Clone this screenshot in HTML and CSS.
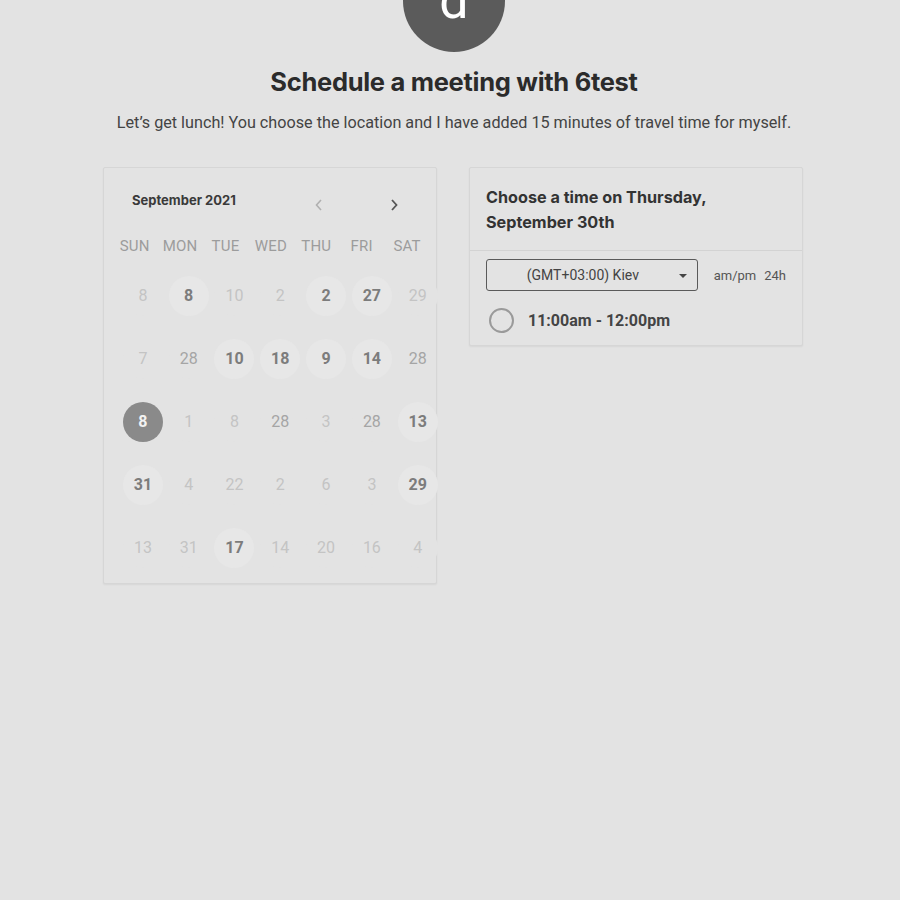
FILE: index.html
```html
<!DOCTYPE html>
<html>
<head>
<meta charset="utf-8">
<link rel="stylesheet" href="styles.css">
</head>
<body>
<div class="page">
  <div class="avatar">d</div>
  <h1 class="title">Schedule a meeting with 6test</h1>
  <p class="subtitle">Let’s get lunch! You choose the location and I have added 15 minutes of travel time for myself.</p>
  <div class="cards">
    <div class="card cal">
      <div class="cal-head">
        <span class="month">September 2021</span>
        <span class="nav">
          <svg class="chev prev" width="12" height="16" viewBox="0 0 12 16"><path d="M8 3 L3.5 8 L8 13" fill="none" stroke="#b0b0b0" stroke-width="1.6"/></svg>
          <svg class="chev next" width="12" height="16" viewBox="0 0 12 16"><path d="M4 3 L8.5 8 L4 13" fill="none" stroke="#555" stroke-width="1.8"/></svg>
        </span>
      </div>
      <div class="weekdays">
        <span>SUN</span><span>MON</span><span>TUE</span><span>WED</span><span>THU</span><span>FRI</span><span>SAT</span>
      </div>
      <div class="days">
        <span class="d light">8</span><span class="d av">8</span><span class="d light">10</span><span class="d light">2</span><span class="d av">2</span><span class="d av">27</span><span class="d light">29</span>
        <span class="d light">7</span><span class="d mid">28</span><span class="d av">10</span><span class="d av">18</span><span class="d av">9</span><span class="d av">14</span><span class="d mid clear">28</span>
        <span class="d sel">8</span><span class="d light">1</span><span class="d light">8</span><span class="d mid">28</span><span class="d light">3</span><span class="d mid">28</span><span class="d av">13</span>
        <span class="d av">31</span><span class="d light">4</span><span class="d light">22</span><span class="d light">2</span><span class="d light">6</span><span class="d light">3</span><span class="d av">29</span>
        <span class="d light">13</span><span class="d light">31</span><span class="d av">17</span><span class="d light">14</span><span class="d light">20</span><span class="d light">16</span><span class="d light">4</span>
      </div>
    </div>
    <div class="card times">
      <div class="times-head">Choose a time on Thursday, September 30th</div>
      <div class="times-body">
        <div class="tz-row">
          <div class="select">
            <span class="sel-text">(GMT+03:00) Kiev</span>
            <span class="caret"></span>
          </div>
          <div class="fmt"><span>am/pm</span><span>24h</span></div>
        </div>
        <div class="slot">
          <span class="radio"></span>
          <span class="slot-text">11:00am - 12:00pm</span>
        </div>
      </div>
    </div>
  </div>
</div>
</body>
</html>
```
FILE: styles.css
```css
html, body {
  margin: 0;
  padding: 0;
  background: #e3e3e3;
}
body {
  font-family: Roboto, "Liberation Sans", sans-serif;
  color: #333;
  height: 900px;
  overflow: hidden;
}
.page {
  display: flex;
  flex-direction: column;
  align-items: center;
  padding-left: 2px;
}
.avatar {
  width: 102px;
  height: 102px;
  margin-top: -50px;
  margin-left: 6px;
  border-radius: 50%;
  background: #5b5b5b;
  color: #fff;
  font-size: 52px;
  line-height: 102px;
  text-align: center;
}
.title {
  margin: 14px 0 0 6px;
  font-family: Inter, "Noto Sans", sans-serif;
  font-weight: 700;
  font-size: 25.5px;
  line-height: 32px;
  color: #2b2b2b;
  letter-spacing: -0.3px;
}
.subtitle {
  margin: 14px 0 0 6px;
  font-size: 16.2px;
  line-height: 22px;
  color: #444;
}
.cards {
  display: flex;
  align-items: flex-start;
  gap: 32px;
  margin-top: 33px;
  margin-left: 4px;
}
.card {
  border: 1px solid #d6d6d6;
  border-radius: 2px;
  box-shadow: 0 1px 2px rgba(0,0,0,0.06);
  background: #e3e3e3;
}
.cal {
  width: 332px;
  height: 415px;
  box-sizing: content-box;
}
.cal-head {
  display: flex;
  align-items: center;
  height: 64px;
  padding-left: 28px;
}
.month {
  font-family: Inter, "Noto Sans", sans-serif;
  font-weight: 700;
  font-size: 13px;
  color: #3a3a3a;
  width: 180px;
  margin-top: 0;
}
.nav {
  display: flex;
  gap: 63px;
  margin-left: 1px;
  margin-top: 10px;
}
.weekdays {
  display: grid;
  grid-template-columns: repeat(7, 45.4px);
  padding-left: 8px;
  height: 28px;
  align-items: center;
}
.weekdays span {
  text-align: center;
  font-size: 15px;
  color: #9c9c9c;
  letter-spacing: 0.2px;
}
.days {
  display: grid;
  grid-template-columns: repeat(7, 45.8px);
  grid-auto-rows: 63px;
  padding-left: 16px;
  margin-top: 4px;
}
.d {
  justify-self: center;
  align-self: center;
  width: 40px;
  height: 40px;
  border-radius: 50%;
  display: flex;
  align-items: center;
  justify-content: center;
  font-size: 16px;
  background: #e3e3e3;
}
.d.clear { background: transparent; }
.d.light { color: #c4c4c4; }
.d.mid { color: #a5a5a5; }
.d.av {
  color: #7c7c7c;
  font-weight: 700;
  background: #e7e7e7;
}
.d.sel {
  color: #f2f2f2;
  font-weight: 700;
  background: #8a8a8a;
}
.times {
  width: 332px;
}
.times-head {
  padding: 17px 16px 15px 16px;
  font-family: Inter, "Noto Sans", sans-serif;
  font-weight: 700;
  font-size: 16.2px;
  line-height: 25px;
  color: #333;
  border-bottom: 1px solid #d3d3d3;
}
.times-body {
  padding: 8px 16px 12px 16px;
}
.tz-row {
  display: flex;
  align-items: center;
}
.select {
  width: 212px;
  height: 30px;
  border: 1px solid #5a5a5a;
  border-radius: 3px;
  position: relative;
  display: flex;
  align-items: center;
  justify-content: center;
  box-sizing: content-box;
}
.sel-text {
  font-size: 14px;
  color: #444;
  margin-left: -18px;
}
.caret {
  position: absolute;
  right: 10px;
  top: 14px;
  width: 0;
  height: 0;
  border-left: 4px solid transparent;
  border-right: 4px solid transparent;
  border-top: 4px solid #444;
}
.fmt {
  display: flex;
  gap: 8px;
  margin-left: 16px;
  font-size: 13px;
  color: #555;
}
.slot {
  display: flex;
  align-items: center;
  margin-top: 17px;
  padding-left: 3px;
}
.radio {
  width: 21px;
  height: 21px;
  border: 2px solid #9a9a9a;
  border-radius: 50%;
}
.slot-text {
  margin-left: 14px;
  font-weight: 700;
  font-size: 16px;
  color: #444;
}
```
